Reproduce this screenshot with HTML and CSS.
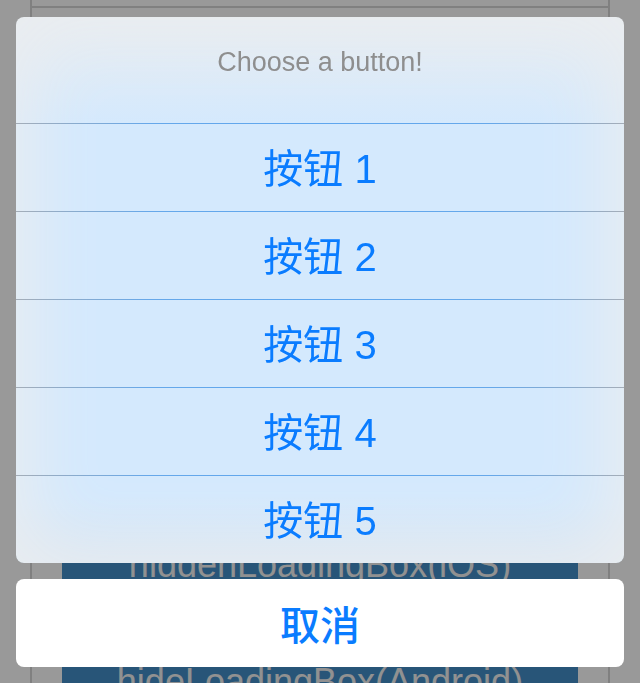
FILE: index.html
```html
<!DOCTYPE html>
<html lang="en">
<head>
    <meta charset="UTF-8">
    <meta name="viewport" content="width=device-width, initial-scale=1.0">
    <title>Loading Box Demo</title>
    <link rel="stylesheet" href="styles.css">
</head>
<body>
    <div class="page">
        <div class="top-row"></div>
        <div class="button-list">
            <button class="demo-btn">showLoadingBox(iOS)</button>
            <button class="demo-btn">showLoadingBox(Android)</button>
            <button class="demo-btn">showActionSheet</button>
            <button class="demo-btn">showAlert</button>
            <button class="demo-btn">hiddenLoadingBox(iOS)</button>
            <button class="demo-btn">hideLoadingBox(Android)</button>
        </div>
    </div>

    <!-- action sheet overlay -->
    <div class="overlay">
        <div class="sheet">
            <div class="sheet-title">Choose a button!</div>
            <div class="sheet-item">按钮 1</div>
            <div class="sheet-item">按钮 2</div>
            <div class="sheet-item">按钮 3</div>
            <div class="sheet-item">按钮 4</div>
            <div class="sheet-item">按钮 5</div>
        </div>
        <div class="sheet-cancel">取消</div>
    </div>
</body>
</html>
```

FILE: styles.css
```css
body {
    font-family: "Liberation Sans", "Noto Sans CJK SC", sans-serif;
    margin: 0;
    padding: 0;
    background-color: white;
}

.page {
    margin: 0 30px;
    height: 683px;
    overflow: hidden;
    border-left: 2px solid #d5d5d5;
    border-right: 2px solid #d5d5d5;
}

.top-row {
    height: 6px;
    border-bottom: 2px solid #d5d5d5;
}

.button-list {
    display: flex;
    flex-direction: column;
    gap: 17px;
    padding: 39px 30px 0;
}

.demo-btn {
    flex-shrink: 0;
    height: 100px;
    border: none;
    background-color: #438ec8;
    color: #f2f2f2;
    font-family: "Liberation Sans", sans-serif;
    font-size: 36px;
    line-height: 100px;
    padding: 0;
}

.overlay {
    position: fixed;
    top: 0;
    left: 0;
    right: 0;
    bottom: 0;
    background-color: rgba(0, 0, 0, 0.4);
    display: flex;
    flex-direction: column;
    justify-content: flex-end;
    gap: 16px;
    padding: 16px;
}

.sheet {
    border-radius: 8px;
    overflow: hidden;
    background-color: #d4e9fd;
    background-image: linear-gradient(to bottom, rgba(234, 237, 240, 0.85) 0, rgba(234, 237, 240, 0) 110px, rgba(234, 237, 240, 0) 480px, rgba(214, 226, 238, 0.6) 100%);
    box-shadow: inset 0 0 70px 14px #eaedf0;
}

.sheet-title {
    height: 106px;
    box-sizing: border-box;
    padding-top: 30px;
    text-align: center;
    font-size: 27px;
    line-height: 30px;
    color: #8e8e8e;
}

.sheet-item {
    height: 88px;
    box-sizing: border-box;
    padding-bottom: 3px;
    background-image: linear-gradient(to right, #a4adb8, #66a8ea 22%, #5ea6ee 50%, #66a8ea 78%, #a4adb8);
    background-size: 100% 1px;
    background-repeat: no-repeat;
    display: flex;
    align-items: center;
    justify-content: center;
    font-size: 40px;
    color: #0a7cff;
}

.sheet-cancel {
    height: 88px;
    border-radius: 8px;
    background-color: white;
    display: flex;
    align-items: center;
    justify-content: center;
    font-size: 40px;
    font-weight: 500;
    color: #0a7cff;
}
```
